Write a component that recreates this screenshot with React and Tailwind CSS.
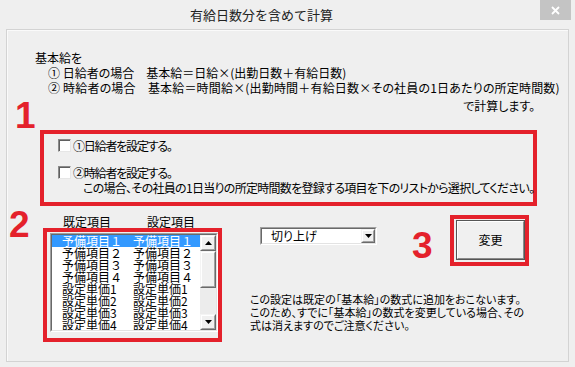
const RED = "border-[#e4212b]";

function Checkbox() {
  return (
    <div className="w-[13px] h-[13px] shrink-0 bg-white border border-t-[#8a8a8a] border-l-[#8a8a8a] border-b-[#e6e6e6] border-r-[#e6e6e6] shadow-[inset_1px_1px_0_#5f5f5f]" />
  );
}

function TriUp() {
  return (
    <svg width="7" height="4" viewBox="0 0 7 4">
      <path d="M3.5 0 L7 4 L0 4 Z" fill="#000" />
    </svg>
  );
}
function TriDown() {
  return (
    <svg width="7" height="4" viewBox="0 0 7 4">
      <path d="M0 0 L7 0 L3.5 4 Z" fill="#000" />
    </svg>
  );
}

function RaisedBtn({ children, className = "" }) {
  return (
    <div className={"bg-[#f0f0f0] border border-t-[#f4f4f4] border-l-[#f4f4f4] border-b-[#6a6a6a] border-r-[#6a6a6a] flex items-center justify-center " + className}>
      <div className="w-full h-full flex items-center justify-center border border-t-white border-l-white border-b-[#a0a0a0] border-r-[#a0a0a0]">
        {children}
      </div>
    </div>
  );
}

const rows = [
  ["予備項目１", "予備項目１"],
  ["予備項目２", "予備項目２"],
  ["予備項目３", "予備項目３"],
  ["予備項目４", "予備項目４"],
  ["設定単価1", "設定単価1"],
  ["設定単価2", "設定単価2"],
  ["設定単価3", "設定単価3"],
  ["設定単価4", "設定単価4"],
];

export default function App() {
  return (
    <div className="relative w-[575px] h-[367px] bg-[#efefef] overflow-hidden text-black font-['Noto_Sans_CJK_JP',sans-serif] [font-feature-settings:'palt']">
      {/* title bar */}
      <div className="relative h-[29px] flex items-center justify-center pr-[52px]">
        <span className="text-[13px] leading-none text-[#222] [font-feature-settings:normal]">有給日数分を含めて計算</span>
        <div className="absolute top-0 right-[4px] w-[31px] h-[20px] bg-[#c4c4c4] flex items-center justify-center">
          <svg width="9" height="9" viewBox="0 0 9 9">
            <path d="M1 1 L8 8 M8 1 L1 8" stroke="#fff" strokeWidth="1.8" />
          </svg>
        </div>
      </div>

      {/* panel */}
      <div className="mx-[6px] h-[333px] border border-[#d3d3d3] shadow-[inset_1px_1px_0_#fafafa]">
        <div className="h-[83px] flex flex-col pl-[28px] pr-[33px] pt-[20px] text-[12px] whitespace-nowrap">
          <div className="h-[15px] leading-[15px] shrink-0">基本給を</div>
          <div className="h-[15px] leading-[15px] shrink-0 pl-[13px]">① 日給者の場合　基本給＝日給×(出勤日数＋有給日数)</div>
          <div className="h-[15px] leading-[15px] shrink-0 pl-[13px] tracking-[0.18px]">② 時給者の場合　基本給＝時間給×(出勤時間＋有給日数×その社員の1日あたりの所定時間数)</div>
          <div className="h-[15px] leading-[15px] shrink-0 mt-[3px] self-end">で計算します。</div>
        </div>

        {/* box 1 */}
        <div className={"mt-[17px] ml-[33px] w-[497px] h-[76px] border-4 " + RED}>
          <div className="flex flex-col pl-[14px] pt-[4px] text-[12px] whitespace-nowrap">
            <div className="flex items-center h-[15px] shrink-0">
              <Checkbox />
              <span className="ml-[2px] leading-[15px] tracking-[-1.2px]">①日給者を設定する。</span>
            </div>
            <div className="mt-[12px] flex items-center h-[15px] shrink-0">
              <Checkbox />
              <span className="ml-[2px] leading-[15px] tracking-[-1.2px]">②時給者を設定する。</span>
            </div>
            <div className="pl-[25px] h-[15px] leading-[15px] shrink-0 tracking-[-0.7px]">この場合、その社員の1日当りの所定時間数を登録する項目を下のリストから選択してください。</div>
          </div>
        </div>

        {/* bottom area */}
        <div className="flex">
          {/* list column */}
          <div className="ml-[36px] w-[179px] flex flex-col">
            <div className="mt-[10px] h-[12px] flex text-[12px] leading-[12px] whitespace-nowrap">
              <span className="ml-[20px]">既定項目</span>
              <span className="ml-[36px]">設定項目</span>
            </div>
            <div className={"h-[114px] border-4 pl-[3px] pt-[1px] " + RED}>
              <div className="w-[168px] h-[99px] border border-t-[#a0a0a0] border-l-[#a0a0a0] border-b-white border-r-white">
                <div className="w-full h-full border border-t-[#696969] border-l-[#696969] border-b-[#e3e3e3] border-r-[#e3e3e3] bg-white flex overflow-hidden">
                  <div className="w-[148px] flex flex-col text-[12px] whitespace-nowrap [font-feature-settings:normal]">
                    {rows.map((r, i) => (
                      <div key={i} className={"h-[12px] leading-[12px] shrink-0 flex " + (i === 0 ? "bg-[#3399ff] text-white" : "")}>
                        <span className="pl-[10px] w-[81px] shrink-0">{r[0]}</span>
                        <span>{r[1]}</span>
                      </div>
                    ))}
                  </div>
                  {/* scrollbar */}
                  <div className="w-[16px] h-full bg-[#ececec] flex flex-col">
                    <RaisedBtn className="w-[16px] h-[16px]"><TriUp /></RaisedBtn>
                    <RaisedBtn className="w-[16px] h-[37px]" />
                    <div className="flex-1" />
                    <RaisedBtn className="w-[16px] h-[16px]"><TriDown /></RaisedBtn>
                  </div>
                </div>
              </div>
            </div>
          </div>

          {/* right column */}
          <div className="ml-[28px] flex flex-col">
            <div className="flex items-start h-[60px]">
              <div className="ml-[10px] mt-[21px] w-[117px] h-[18px] border border-t-[#a0a0a0] border-l-[#a0a0a0] border-b-white border-r-white">
                <div className="w-full h-full border border-t-[#696969] border-l-[#696969] border-b-[#e3e3e3] border-r-[#e3e3e3] bg-white flex items-center">
                  <span className="flex-1 pl-[9px] text-[12px] leading-[14px]">切り上げ</span>
                  <RaisedBtn className="w-[14px] h-[14px]"><TriDown /></RaisedBtn>
                </div>
              </div>
              <div className={"ml-[73px] mt-[9px] w-[79px] h-[51px] border-4 pl-[2px] pt-[1px] " + RED}>
                <div className="w-[69px] h-[40px] bg-[#f0f0f0] border border-[#555] flex">
                  <div className="flex-1 flex items-center justify-center border border-t-white border-l-white border-b-[#8a8a8a] border-r-[#8a8a8a] text-[12px] [font-feature-settings:normal]">
                    変更
                  </div>
                </div>
              </div>
            </div>
            <div className="mt-[27px] flex flex-col text-[11px] whitespace-nowrap">
              <div className="h-[13px] leading-[13px]">この設定は既定の「基本給」の数式に追加をおこないます。</div>
              <div className="h-[13px] leading-[13px]">このため、すでに「基本給」の数式を変更している場合、その</div>
              <div className="h-[13px] leading-[13px]">式は消えますのでご注意ください。</div>
            </div>
          </div>
        </div>
      </div>

      {/* annotations */}
      <div className="absolute left-[15px] top-[97px] text-[37px] leading-[37px] font-bold text-[#e4212b] font-['Liberation_Sans',Arial,sans-serif]">1</div>
      <div className="absolute left-[9px] top-[206px] text-[37px] leading-[37px] font-bold text-[#e4212b] font-['Liberation_Sans',Arial,sans-serif]">2</div>
      <div className="absolute left-[412px] top-[227px] text-[37px] leading-[37px] font-bold text-[#e4212b] font-['Liberation_Sans',Arial,sans-serif]">3</div>
    </div>
  );
}
